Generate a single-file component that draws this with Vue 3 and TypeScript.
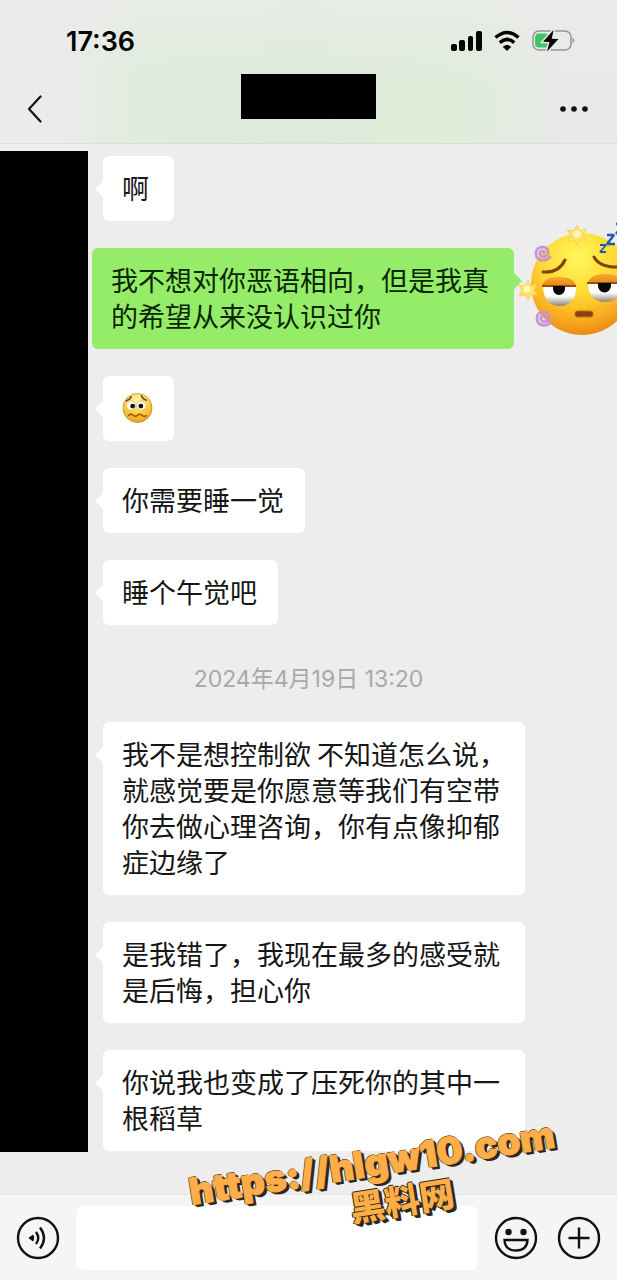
<script setup lang="ts">
import { ref } from 'vue'

interface Message {
  id: number
  side: 'left' | 'right'
  lines?: string
  wide?: boolean
  emoji?: boolean
}

const earlier: Message[] = [
  { id: 1, side: 'left', lines: '啊' },
  { id: 2, side: 'right', lines: '我不想对你恶语相向，但是我真\n的希望从来没认识过你', wide: true },
  { id: 3, side: 'left', emoji: true },
  { id: 4, side: 'left', lines: '你需要睡一觉' },
  { id: 5, side: 'left', lines: '睡个午觉吧' },
]
const later: Message[] = [
  { id: 6, side: 'left', wide: true, lines: '我不是想控制欲 不知道怎么说，\n就感觉要是你愿意等我们有空带\n你去做心理咨询，你有点像抑郁\n症边缘了' },
  { id: 7, side: 'left', wide: true, lines: '是我错了，我现在最多的感受就\n是后悔，担心你' },
  { id: 8, side: 'left', wide: true, lines: '你说我也变成了压死你的其中一\n根稻草' },
]
const groups = [
  { key: 'a', date: '', items: earlier },
  { key: 'b', date: '2024年4月19日 13:20', items: later },
]
const draft = ref('')
</script>

<template>
  <div class="phone">
    <header class="top">
      <div class="status">
        <time class="clock">17:36</time>
        <svg class="signals" viewBox="0 0 126 24" aria-hidden="true">
          <g fill="#050505">
            <rect x="1" y="14" width="6" height="7" rx="2" />
            <rect x="9" y="10" width="6" height="11" rx="2" />
            <rect x="18" y="6" width="5" height="15" rx="2" />
            <rect x="26" y="1" width="6" height="20" rx="2" />
            <path d="M57 20.500 L53.300 16.800 Q57 13.800 60.700 16.800 Z" stroke="#050505" stroke-linejoin="round" />
          </g>
          <path d="M45.500 7.500 Q57 -2.600 68.500 7.500 M49.800 12.600 Q57 6.200 64.200 12.600" fill="none" stroke="#050505" stroke-width="3.500" />
          <rect x="83" y="1" width="38" height="19" rx="6" fill="none" stroke="#939693" stroke-width="1.500" />
          <path d="M122.500 7.500 Q126 10.500 122.500 13.500Z" fill="#939693" />
          <rect x="85" y="3.500" width="14" height="14" rx="4" fill="#3fc567" />
          <path d="M103.500 0 L93 11.800 L99.500 12 L97 21.500 L108.500 9 L101.800 8.800 Z" fill="#050505" stroke="#e5ece2" stroke-width="3" paint-order="stroke" />
        </svg>
      </div>
      <nav class="nav">
        <button class="back" aria-label="返回">
          <svg viewBox="0 0 16 28"><path d="M13.500 1.500 L2 14 L13.500 26.500" fill="none" stroke="#111" stroke-width="2.200" stroke-linecap="round" stroke-linejoin="round" /></svg>
        </button>
        <div class="name-mask"></div>
        <button class="more" aria-label="更多">
          <svg viewBox="0 0 30 8"><g fill="#111"><circle cx="4" cy="4" r="2.800" /><circle cx="15" cy="4" r="2.800" /><circle cx="26" cy="4" r="2.800" /></g></svg>
        </button>
      </nav>
    </header>

    <main class="chat">
      <div class="avatar-mask"></div>
      <section v-for="g in groups" :key="g.key" class="group">
        <time v-if="g.date" class="date">{{ g.date }}</time>
        <div v-for="m in g.items" :key="m.id" class="row" :class="m.side">
          <div class="bubble" :class="{ wide: m.wide }">
            <svg v-if="m.emoji" class="emoji" viewBox="0 0 32 32" role="img" aria-label="难过">
              <defs>
                <radialGradient id="smallFace" cx=".48" cy=".25" r=".75">
                  <stop offset="0" stop-color="#fff4b0" /><stop offset=".5" stop-color="#fcd84c" /><stop offset="1" stop-color="#eca01e" />
                </radialGradient>
              </defs>
              <circle cx="16" cy="16" r="15" fill="url(#smallFace)" stroke="#b98a35" stroke-width=".8" />
              <circle cx="9.500" cy="13.500" r="4.800" fill="#fff" stroke="#dca637" stroke-width=".6" />
              <circle cx="20" cy="13.500" r="4.800" fill="#fff" stroke="#dca637" stroke-width=".6" />
              <circle cx="11" cy="14" r="2.500" fill="#111" /><circle cx="19.500" cy="14" r="2.500" fill="#111" />
              <g fill="none" stroke="#69400e" stroke-width="1.600" stroke-linecap="round">
                <path d="M4.500 8.500 Q8 7.500 9.500 4.500 M20 3.500 Q21.500 7 25 8" />
                <path d="M7 23.500 Q9 21.500 11.500 23.500 T16 23.500 T20.500 23.500 T25 24" stroke="#9a5309" />
              </g>
            </svg>
            <template v-else>{{ m.lines }}</template>
          </div>
          <svg v-if="m.side === 'right'" class="sticker" viewBox="510 215 107 130" aria-hidden="true">
            <defs>
              <radialGradient id="face" cx=".46" cy=".24" r=".8">
                <stop offset="0" stop-color="#fff75c" /><stop offset=".45" stop-color="#fdd932" /><stop offset=".78" stop-color="#f8a91f" /><stop offset="1" stop-color="#e88012" />
              </radialGradient>
              <linearGradient id="lid" x1="0" y1="0" x2="0" y2="1">
                <stop offset="0" stop-color="#f5a92b" /><stop offset="1" stop-color="#e9861c" />
              </linearGradient>
              <linearGradient id="eye" x1="0" y1="0" x2="0" y2="1">
                <stop offset=".5" stop-color="#fff" /><stop offset="1" stop-color="#8f8371" />
              </linearGradient>
              <path id="star" d="M0 -10 L3 -4 L9 -6 L6 0 L10 5 L3 5 L0 10 L-3 5 L-9 6 L-6 0 L-10 -5 L-3 -4Z" />
              <path id="swirl" d="M1 0 C2 -3 -4 -3 -3 1 C-2 6 6 4 5 -2 C4 -8 -7 -7 -7 0 C-7 9 3 9 7 4" fill="none" stroke-linecap="round" />
            </defs>
            <circle cx="582" cy="284" r="51" fill="url(#face)" />
            <g fill="none" stroke="#80430b" stroke-width="3" stroke-linecap="round">
              <path d="M543 272 Q559 273 565 260 M594 257 Q600 268 620 267" />
            </g>
            <path d="M542 286 Q544 277 559 277 Q574 277 576 286Z" fill="url(#lid)" />
            <path d="M587 284 Q590 274 605 274 Q620 274 622 284Z" fill="url(#lid)" />
            <path d="M543 286 H576 C577 298 570 306 560 306 C549 306 543 298 543 286Z" fill="url(#eye)" />
            <path d="M588 283 H622 C622 295 615 302 605 302 C595 302 588 295 588 283Z" fill="url(#eye)" />
            <path d="M542 286 H576 M587 283 H622" stroke="#9b4f0a" stroke-width="2" />
            <path d="M553 286 H565 V289 A6 6 0 0 1 553 289Z M598 283 H611 V286 A6 6 0 0 1 598 286Z" fill="#080706" />
            <rect x="575" y="311" width="18" height="6" rx="2.500" fill="#874310" stroke="#c56b12" />
            <g fill="#ffe36a" stroke="#f7c944" stroke-width=".7" stroke-linejoin="round">
              <use href="#star" x="577" y="235" /><use href="#star" x="528" y="290" />
            </g>
            <g fill="#fff9bc"><circle cx="577" cy="234" r="3.500" /><circle cx="527" cy="289" r="3.500" /></g>
            <g stroke="#c791d3" stroke-width="2.800" opacity=".95">
              <use href="#swirl" x="543" y="253" /><use href="#swirl" x="544" y="318" />
            </g>
            <g fill="none" stroke="#2458b0" stroke-linejoin="bevel">
              <path d="M600 245 H606 L600 252 H606" stroke-width="1.800" />
              <path d="M607 235 H614 L607 244 H615" stroke-width="2.400" />
              <path d="M616 224 H624 L616 234" stroke-width="2.600" />
            </g>
          </svg>
        </div>
      </section>
    </main>

    <footer class="composer">
      <button aria-label="语音">
        <svg viewBox="0 0 44 44">
          <circle cx="22" cy="22" r="20" />
          <path d="M13 22 L17 19 Q18.500 22 17 25Z" fill="#111" stroke-width="1" stroke-linejoin="round" />
          <path d="M20 16 Q24.500 22 20 28 M24 11.500 Q32 22 24 32.500" />
        </svg>
      </button>
      <input v-model="draft" type="text" aria-label="消息" />
      <button aria-label="表情">
        <svg viewBox="0 0 44 44">
          <circle cx="22" cy="22" r="20" />
          <circle cx="14.500" cy="16" r="3.200" fill="#111" stroke="none" /><circle cx="29.500" cy="16" r="3.200" fill="#111" stroke="none" />
          <path d="M10.500 24 H33.500 Q33 34.500 22 34.500 Q11 34.500 10.500 24Z" />
        </svg>
      </button>
      <button aria-label="添加">
        <svg viewBox="0 0 44 44"><circle cx="22" cy="22" r="20" /><path d="M22 11.500 V32.500 M11.500 22 H32.500" /></svg>
      </button>
    </footer>

    <div class="watermark">
      <span class="url">https://hlgw10.com</span>
      <span class="brand">黑料网</span>
    </div>
  </div>
</template>

<style>
body {
  margin: 0;
  background: #ededed;
}
</style>

<style scoped>
.phone {
  position: relative;
  display: flex;
  flex-direction: column;
  min-height: 100vh;
  overflow: hidden;
  background: #ededed;
  color: #161616;
  font-family: "Noto Sans CJK SC", "Noto Sans", sans-serif;
}
button {
  display: flex;
  padding: 0;
  border: 0;
  background: none;
}
.top {
  box-sizing: border-box;
  height: 144px;
  border-bottom: 1px solid #dcdedb;
  background:
    linear-gradient(to bottom, rgba(234, 235, 233, 0.8), rgba(234, 235, 233, 0) 60%),
    linear-gradient(to right, #ebebeb 10%, #dfecdb 23%, #deebda 50%, #dfedda 75%, #e9e9e9 92%);
}
.status {
  display: flex;
  align-items: center;
  justify-content: space-between;
  height: 74px;
  padding: 10px 41px 0 66px;
  box-sizing: border-box;
}
.clock {
  font: 600 27px/32px Inter, sans-serif;
  color: #050505;
}
.signals {
  width: 126px;
  height: 24px;
}
.nav {
  display: grid;
  grid-template-columns: 1fr auto 1fr;
  align-items: start;
  padding: 0 28px 0 27px;
}
.back {
  margin-top: 21px;
}
.back svg {
  width: 16px;
  height: 28px;
}
.name-mask {
  width: 135px;
  height: 45px;
  background: #000;
}
.more {
  justify-self: end;
  margin-top: 31px;
}
.more svg {
  width: 30px;
  height: 8px;
}
.chat {
  position: relative;
  flex: 1;
  padding: 12px 0 42px;
}
.avatar-mask {
  position: absolute;
  top: 7px;
  bottom: 42px;
  left: 0;
  width: 88px;
  background: #000;
}
.group {
  display: flex;
  flex-direction: column;
  gap: 27px;
}
.date {
  padding-top: 38px;
  text-align: center;
  font: 400 23px/32px Inter, "Noto Sans CJK SC", sans-serif;
  color: #a8a8a8;
}
.row {
  position: relative;
  display: flex;
}
.row.left {
  padding: 0 92px 0 103px;
}
.row.right {
  padding: 0 103px 0 92px;
}
.bubble {
  position: relative;
  box-sizing: border-box;
  min-width: 71px;
  padding: 14px 21px 15px 19px;
  border-radius: 6px;
  background: #fff;
  font-size: 27px;
  line-height: 36px;
  white-space: pre;
}
.bubble.wide {
  flex: 1;
  min-width: 0;
}
.bubble::before {
  content: "";
  position: absolute;
  top: 24px;
  left: -8px;
  width: 9px;
  height: 18px;
  background: #fff;
  clip-path: polygon(0 50%, 100% 0, 100% 100%);
}
.right .bubble {
  background: #95ec69;
  color: #0b2605;
}
.right .bubble::before {
  left: auto;
  right: -8px;
  background: #95ec69;
  clip-path: polygon(100% 50%, 0 0, 0 100%);
}
.emoji {
  display: block;
  width: 31px;
  height: 32px;
  margin: 2px 0;
}
.sticker {
  position: absolute;
  top: -33px;
  right: 0;
  width: 107px;
  height: 130px;
}
.composer {
  display: flex;
  align-items: flex-start;
  gap: 16px;
  box-sizing: border-box;
  height: 86px;
  padding: 11px 16px 0;
  border-top: 1px solid #e6e6e6;
  background: #f5f5f5;
}
.composer button {
  margin-top: 10px;
}
.composer svg {
  width: 44px;
  height: 44px;
  fill: none;
  stroke: #111;
  stroke-width: 2.4;
}
.composer button + button {
  margin-left: 3px;
}
.composer input {
  flex: 1;
  min-width: 0;
  height: 64px;
  box-sizing: border-box;
  padding: 0 16px;
  border: 0;
  border-radius: 7px;
  background: #fff;
  font: 27px "Noto Sans CJK SC", sans-serif;
}
.watermark {
  position: absolute;
  left: 190px;
  bottom: 59px;
  display: flex;
  flex-direction: column;
  align-items: center;
  transform: rotate(-9deg);
  color: #fdae48;
  text-shadow: -1px 0 #30281c, 0 -1px #30281c, 1px 1px #30281c, 2px 2px #30281c, 3px 3px #30281c;
  white-space: nowrap;
}
.url {
  font: 900 37px/44px Inter, sans-serif;
  -webkit-text-stroke: 1px #fdae48;
}
.brand {
  padding-left: 48px;
  font: 900 35px/36px "Noto Sans CJK SC", sans-serif;
}
</style>
